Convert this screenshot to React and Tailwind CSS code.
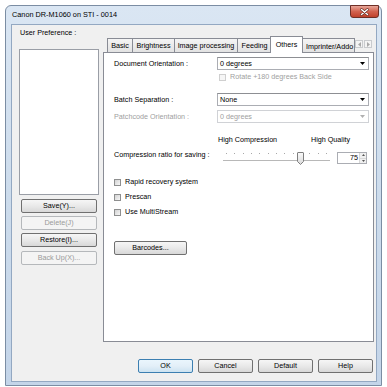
const btnBase =
  'flex items-center justify-center h-[14px] rounded-[2px] border leading-none';
const btnOn =
  'border-[#707070] bg-linear-to-b from-[#f6f6f6] via-[#e9e9e9] to-[#d8d8d8] text-black';
const btnOff = 'border-[#b5b8bb] bg-[#f4f4f4] text-[#9a9a9a]';

function Button({ children, className = '', disabled, primary }) {
  const tone = disabled
    ? btnOff
    : primary
      ? 'border-[#3c7fb1] bg-linear-to-b from-[#eaf6fd] via-[#e3eff8] to-[#cde3f1] text-black'
      : btnOn;
  return <div className={`${btnBase} ${tone} ${className}`}>{children}</div>;
}

function Arrow({ disabled }) {
  return (
    <svg width="5" height="3" viewBox="0 0 5 3">
      <polygon points="0,0 5,0 2.5,3" fill={disabled ? '#b0b0b0' : '#000'} />
    </svg>
  );
}

function Select({ value, disabled }) {
  return (
    <div
      className={`flex items-center w-[152px] h-[13px] border bg-white pl-[2px] pr-[3px] ${
        disabled
          ? 'border-[#d0d2d6] text-[#a0a0a0]'
          : 'border-[#abadb3] border-t-[#8d8f93] text-black'
      }`}
    >
      <span className="flex-1 leading-none">{value}</span>
      <Arrow disabled={disabled} />
    </div>
  );
}

function Check({ label, disabled }) {
  return (
    <div className="flex items-center h-[8px]">
      <span
        className={`w-[7px] h-[7px] border ${
          disabled
            ? 'border-[#cfcfcf] bg-[#f6f6f6]'
            : 'border-[#8e8f8f] bg-linear-to-br from-[#d2d2d2] to-[#f7f7f7]'
        }`}
      />
      <span className={`ml-[4px] leading-none ${disabled ? 'text-[#a0a0a0]' : 'text-black'}`}>
        {label}
      </span>
    </div>
  );
}

const tabs = [
  { name: 'Basic', w: 'w-[26px]' },
  { name: 'Brightness', w: 'w-[43px]' },
  { name: 'Image processing', w: 'w-[64px]' },
  { name: 'Feeding', w: 'w-[35px]' },
];

function TabStrip() {
  return (
    <div className="flex items-end h-[16px] pl-[4px]">
      {tabs.map((t, i) => (
        <div
          key={t.name}
          className={`${t.w} h-[14px] ${i ? '-ml-px' : ''} flex items-center justify-center border border-b-0 border-[#898c95] bg-linear-to-b from-[#f5f5f5] to-[#e2e2e2] whitespace-nowrap leading-none pt-px`}
        >
          {t.name}
        </div>
      ))}
      <div className="relative z-10 -ml-[2px] -mb-px w-[33px] h-[17px] flex justify-center pt-[4px] border border-b-0 border-[#898c95] bg-white leading-none">
        Others
      </div>
      <div className="-ml-px w-[53px] h-[14px] border border-b-0 border-[#898c95] bg-linear-to-b from-[#f5f5f5] to-[#e2e2e2] overflow-hidden whitespace-nowrap leading-none pl-[3px] pt-[4px]">
        Imprinter/Addo
      </div>
      <div className="ml-auto mr-[2px] mb-[4px] flex gap-[1px]">
        <div className="w-[8px] h-[8px] border border-[#c9cbce] bg-[#f4f4f4] flex items-center justify-center">
          <svg width="3" height="5" viewBox="0 0 3 5">
            <polygon points="3,0 3,5 0,2.5" fill="#a8a8a8" />
          </svg>
        </div>
        <div className="w-[8px] h-[8px] border border-[#c9cbce] bg-[#f4f4f4] flex items-center justify-center">
          <svg width="3" height="5" viewBox="0 0 3 5">
            <polygon points="0,0 0,5 3,2.5" fill="#a8a8a8" />
          </svg>
        </div>
      </div>
    </div>
  );
}

function Slider() {
  return (
    <div className="relative ml-[6px] w-[107px] h-[15px]">
      <div className="flex justify-between px-[3px] pt-[2px]">
        {Array.from({ length: 13 }).map((_, i) => (
          <span key={i} className="w-px h-px bg-[#a8a8a8]" />
        ))}
      </div>
      <div className="mt-[6px] h-[2px] border-t border-[#b8b8b8] bg-[#f4f4f4] border-b border-b-white" />
      <svg className="absolute left-[74px] top-[1px]" width="7" height="13" viewBox="0 0 7 13">
        <defs>
          <linearGradient id="th" x1="0" y1="0" x2="0" y2="1">
            <stop offset="0" stopColor="#fbfbfb" />
            <stop offset="1" stopColor="#d9d9d9" />
          </linearGradient>
        </defs>
        <path d="M0.5 1 Q0.5 0.5 1 0.5 H6 Q6.5 0.5 6.5 1 V9.5 L3.5 12.5 L0.5 9.5 Z" fill="url(#th)" stroke="#7f7f7f" />
      </svg>
    </div>
  );
}

function Spin() {
  return (
    <div className="ml-[7px] mt-[1px] w-[30px] h-[12px] flex border border-[#abadb3] bg-white">
      <span className="flex-1 text-right pr-[1px] leading-[10px]">75</span>
      <div className="w-[7px] flex flex-col border-l border-[#d8d8d8]">
        <div className="flex-1 flex items-center justify-center bg-[#f0f0f0] border-b border-[#d8d8d8]">
          <svg width="3" height="2" viewBox="0 0 3 2">
            <polygon points="0,2 3,2 1.5,0" fill="#555" />
          </svg>
        </div>
        <div className="flex-1 flex items-center justify-center bg-[#f0f0f0]">
          <svg width="3" height="2" viewBox="0 0 3 2">
            <polygon points="0,0 3,0 1.5,2" fill="#555" />
          </svg>
        </div>
      </div>
    </div>
  );
}

function OthersPanel() {
  return (
    <div className="h-[290px] border border-[#898c95] bg-white pt-[4px] pl-[10px]">
      <div className="flex items-center h-[13px]">
        <span className="w-[103px] leading-none">Document Orientation :</span>
        <Select value="0 degrees" />
      </div>
      <div className="mt-[3px] pl-[105px]">
        <Check label="Rotate +180 degrees Back Side" disabled />
      </div>
      <div className="mt-[12px] flex items-center h-[13px]">
        <span className="w-[103px] leading-none">Batch Separation :</span>
        <Select value="None" />
      </div>
      <div className="mt-[4px] flex items-center h-[13px]">
        <span className="w-[103px] leading-none text-[#a0a0a0]">Patchcode Orientation :</span>
        <Select value="0 degrees" disabled />
      </div>
      <div className="mt-[13px] flex h-[8px] pl-[104px] leading-[8px]">
        <span className="w-[93px]">High Compression</span>
        <span>High Quality</span>
      </div>
      <div className="mt-[7px] flex items-start h-[15px]">
        <span className="w-[103px] leading-[8px]">Compression ratio for saving :</span>
        <Slider />
        <Spin />
      </div>
      <div className="mt-[12px]">
        <Check label="Rapid recovery system" />
      </div>
      <div className="mt-[7px]">
        <Check label="Prescan" />
      </div>
      <div className="mt-[7px]">
        <Check label="Use MultiStream" />
      </div>
      <Button className="mt-[25px] w-[73px]">Barcodes...</Button>
    </div>
  );
}

export default function App() {
  return (
    <div className="w-[387px] h-[387px] overflow-hidden bg-white pl-[5px] pt-[5px] font-['Liberation_Sans',Arial,sans-serif] text-[7.2px] leading-none text-black">
      <div className="w-[377px] h-[381px] rounded-t-[6px] border border-[#7b8da3] bg-linear-to-b from-[#dae6f3] via-[#cddcec] to-[#c4d5e9] flex flex-col">
        <div className="h-[18px] flex items-center">
          <span className="pl-[6px] text-[7.3px] leading-none">Canon DR-M1060 on STI - 0014</span>
          <div className="ml-auto mr-[2px] self-start -mt-px w-[29px] h-[13px] rounded-b-[3px] border border-[#6e2f26] bg-linear-to-b from-[#e7a699] via-[#d2624f] to-[#c0412b] flex items-center justify-center">
            <svg width="9" height="8" viewBox="0 0 9 8">
              <path d="M1.5 1.5 L7.5 6.5 M7.5 1.5 L1.5 6.5" stroke="#5a2a22" strokeWidth="2.6" strokeLinecap="round" />
              <path d="M1.5 1.5 L7.5 6.5 M7.5 1.5 L1.5 6.5" stroke="#ffffff" strokeWidth="1.5" strokeLinecap="round" />
            </svg>
          </div>
        </div>
        <div className="ml-[5px] w-[366px] h-[358px] border border-[#93a8c2] bg-[#f0f0f0] flex flex-col">
          <div className="flex h-[317px]">
            <div className="w-[91px] pl-[7px]">
              <div className="pt-[4px] pl-[1px] leading-[8px]">User Preference :</div>
              <div className="mt-[12px] w-[80px] h-[146px] border border-[#9a9ea6] bg-white" />
              <Button className="mt-[4px] ml-[2px] w-[76px]">Save(Y)...</Button>
              <Button className="mt-[3px] ml-[2px] w-[76px]" disabled>
                Delete(J)
              </Button>
              <Button className="mt-[3px] ml-[2px] w-[76px]">Restore(I)...</Button>
              <Button className="mt-[4px] ml-[2px] w-[76px]" disabled>
                Back Up(X)...
              </Button>
            </div>
            <div className="w-[271px] pt-[11px]">
              <TabStrip />
              <OthersPanel />
            </div>
          </div>
          <div className="mt-[17px] flex gap-[5px] pl-[126px]">
            <Button className="w-[55px]" primary>
              OK
            </Button>
            <Button className="w-[55px]">Cancel</Button>
            <Button className="w-[55px]">Default</Button>
            <Button className="w-[55px]">Help</Button>
          </div>
        </div>
      </div>
    </div>
  );
}
